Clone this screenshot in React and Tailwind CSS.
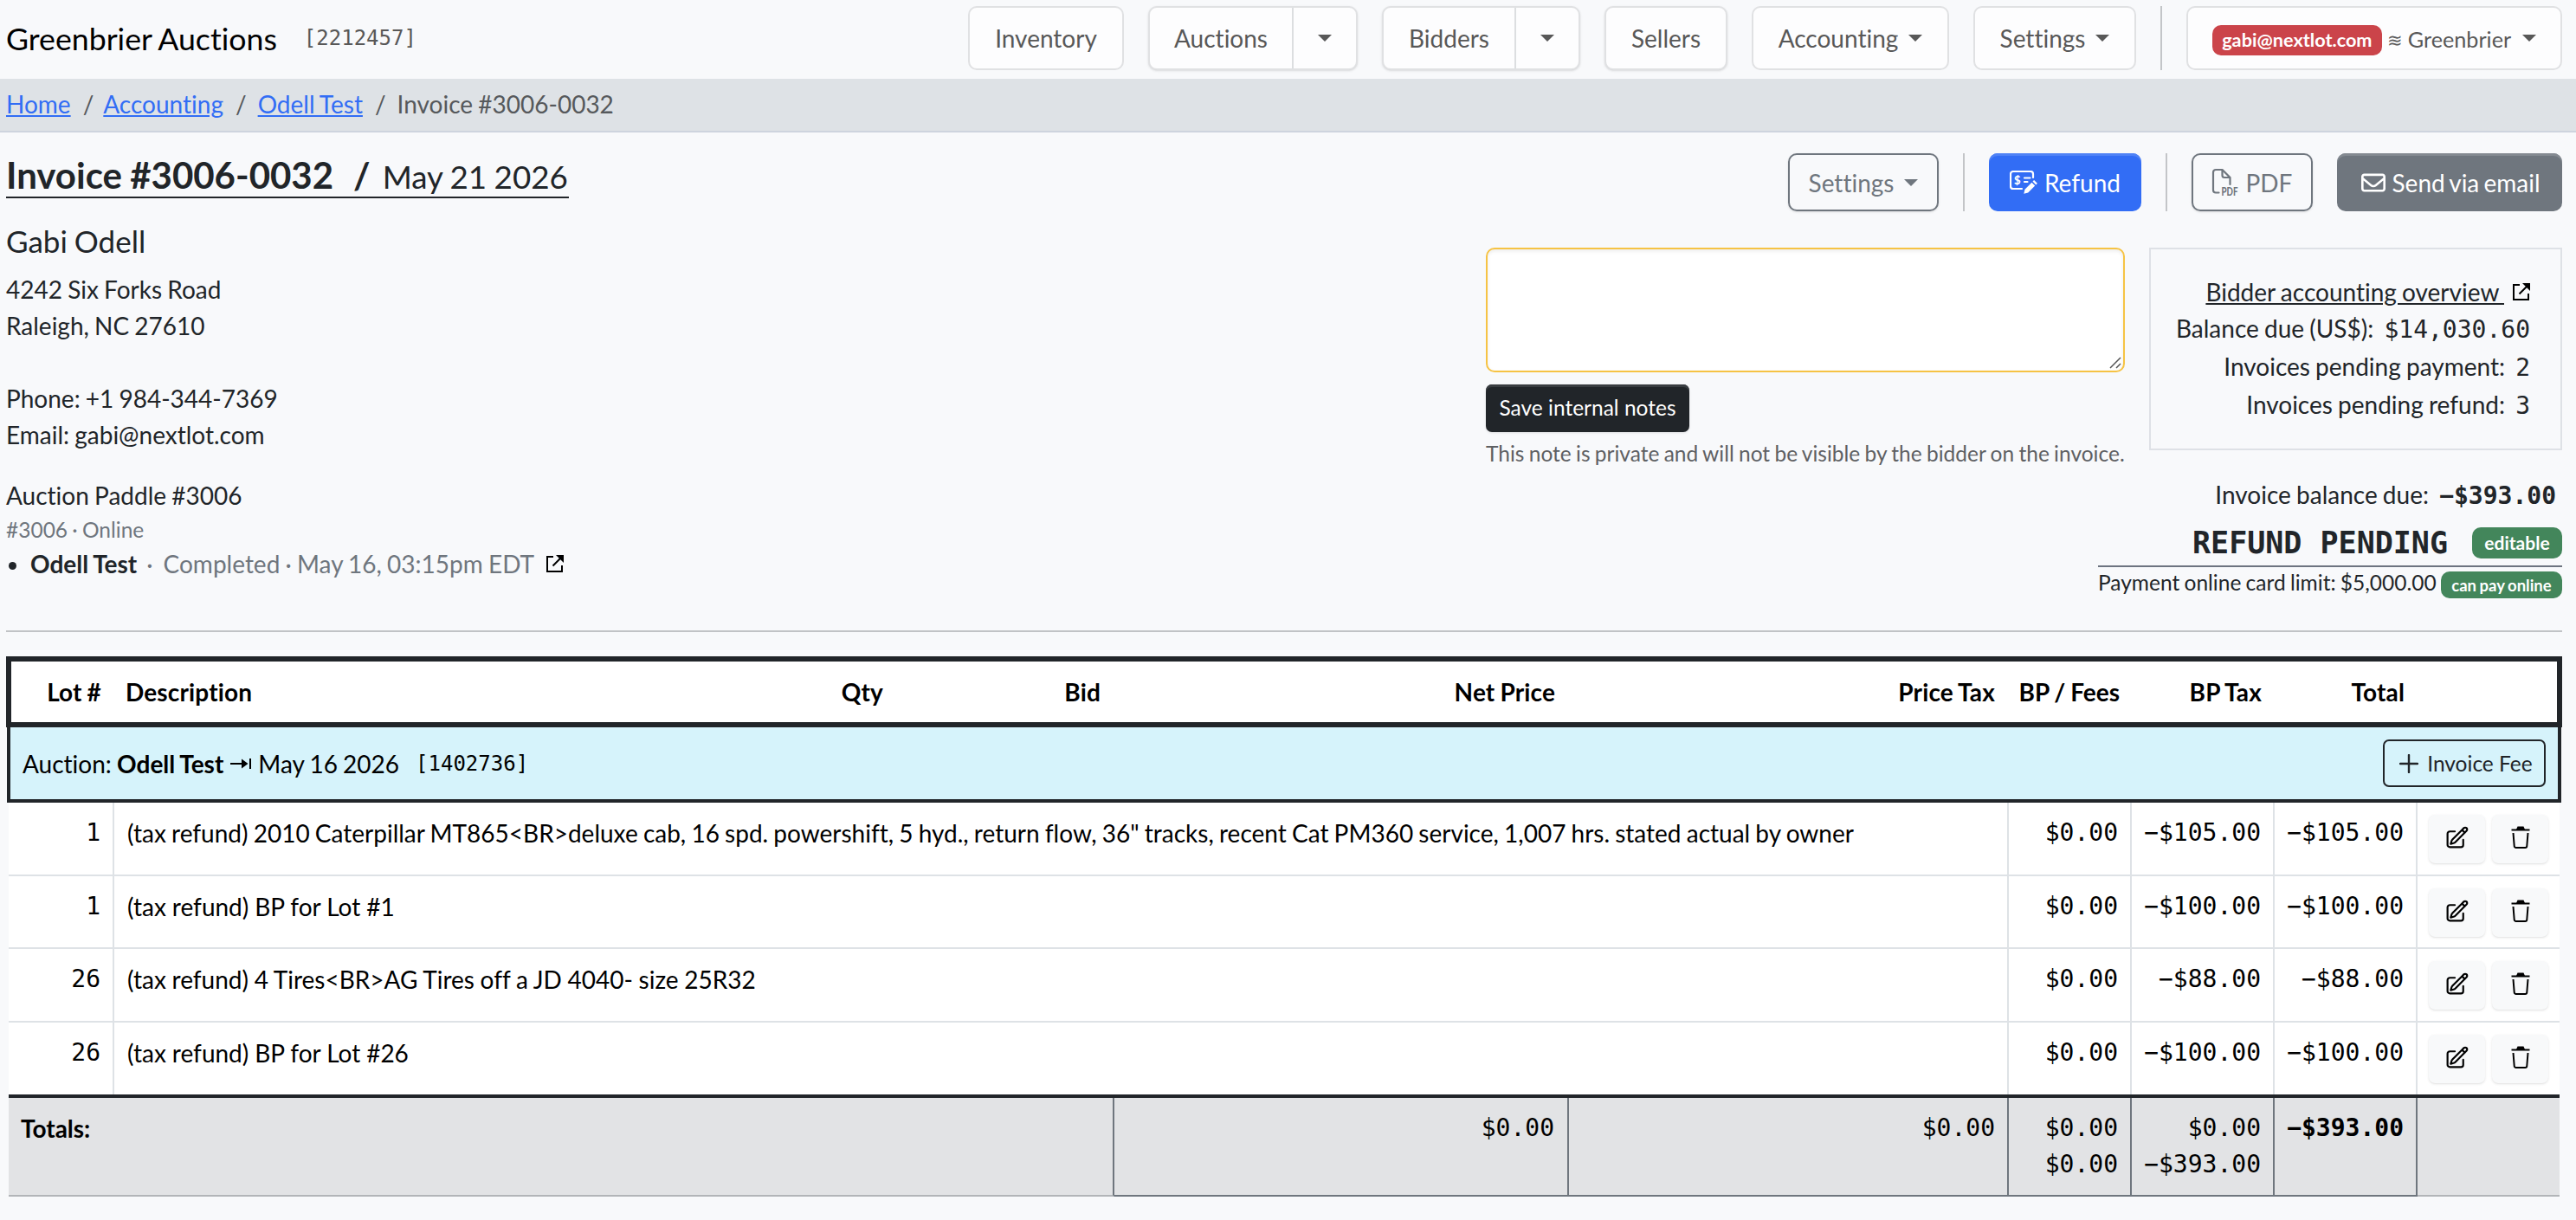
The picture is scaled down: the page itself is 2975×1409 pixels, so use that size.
import React from "react";
import { FaRegEnvelope } from "react-icons/fa6";
import { HiOutlinePencilSquare } from "react-icons/hi2";

const lots = [
  { lot: "1", desc: '(tax refund) 2010 Caterpillar MT865<BR>deluxe cab, 16 spd. powershift, 5 hyd., return flow, 36" tracks, recent Cat PM360 service, 1,007 hrs. stated actual by owner', fees: "$0.00", tax: "−$105.00", total: "−$105.00", height: "h-[85px] border-b-2" },
  { lot: "1", desc: "(tax refund) BP for Lot #1", fees: "$0.00", tax: "−$100.00", total: "−$100.00", height: "h-[84px] border-b-2 [word-spacing:-0.2px]" },
  { lot: "26", desc: "(tax refund) 4 Tires<BR>AG Tires off a JD 4040- size 25R32", fees: "$0.00", tax: "−$88.00", total: "−$88.00", height: "h-[85px] border-b-2 [word-spacing:-0.5px]" },
  { lot: "26", desc: "(tax refund) BP for Lot #26", fees: "$0.00", tax: "−$100.00", total: "−$100.00", height: "h-[83px] [word-spacing:-0.2px]" },
];

function Caret({ className = "" }) {
  return (
    <svg className={`h-2 w-4 ${className}`} viewBox="0 0 16 8" fill="currentColor">
      <path d="M0 0h16L8 8z" />
    </svg>
  );
}

function ExternalIcon() {
  return (
    <svg className="size-5" viewBox="0 0 20 20" fill="none" stroke="#000" strokeWidth="2">
      <path d="M8 2H1v17h17v-7M7.500 12.500L17 3" />
      <path d="M11 0h9v9l-3-3-3-3z" fill="#000" stroke="none" />
    </svg>
  );
}

function RefundIcon() {
  return (
    <svg className="h-[27px] w-8" viewBox="0 0 32 27" fill="none" stroke="currentColor" strokeWidth="2.2" strokeLinecap="round">
      <path d="M14 21H4a3 3 0 0 1-3-3V4a3 3 0 0 1 3-3h20a3 3 0 0 1 3 3v4" />
      <path d="M17 8.500h6.500M17 13h3.500" />
      <text x="5" y="15.700" fontSize="13" fontWeight="900" fill="currentColor" stroke="none">$</text>
      <path d="M16.300 26.700l1.200-5 8-8 3.700 3.700-8 8zM26.500 12.600l1.600-1.600 3.800 3.800-1.600 1.600z" fill="currentColor" stroke="none" />
    </svg>
  );
}

function PdfIcon() {
  return (
    <svg className="h-[31px] w-[30px] overflow-visible" viewBox="0 0 30 31" fill="none" stroke="currentColor" strokeWidth="2.200" strokeLinecap="round" strokeLinejoin="round">
      <path d="M7.500 27.500H4a3 3 0 0 1-3-3V4a3 3 0 0 1 3-3h7.500l9 9v8" />
      <path d="M11.500 1.500v6a2.500 2.500 0 0 0 2.500 2.500h6" />
      <text x="10.500" y="30.500" fontSize="12.500" fontWeight="900" textLength="19" lengthAdjust="spacingAndGlyphs" fill="currentColor" stroke="none">PDF</text>
    </svg>
  );
}

function TrashIcon() {
  return (
    <svg className="h-[26px] w-[22px]" viewBox="0 0 22 26" fill="none" stroke="#000" strokeWidth="2">
      <path d="M0.500 4.500h21" />
      <path d="M6 4l1.500-3.500h7L16 4z" fill="#000" stroke="none" />
      <path d="M2.500 8l1.200 15a2 2 0 0 0 2 2h10.600a2 2 0 0 0 2-2l1.200-15" />
    </svg>
  );
}

const navButton = "flex h-[74px] items-center justify-center rounded-[10px] border-2 border-[#e0e1e3] bg-[#fdfdfe] text-[#585858]";

function Navbar() {
  return (
    <header className="flex h-[91px] items-start justify-between pt-[7px] pr-4 pl-[7px]">
      <div className="flex h-[74px] items-center">
        <span className="pt-px text-[35.700px] text-black">Greenbrier Auctions</span>
        <span className="ml-[31px] font-['DejaVu_Sans_Mono'] text-2xl text-[#585858]">[2212457]</span>
      </div>
      <nav className="flex gap-7">
        <button className={`${navButton} w-[180px]`}>Inventory</button>
        <div className={`${navButton} w-[242px] shadow-sm`}>
          <span className="flex h-full w-[166px] items-center justify-center border-r-2 border-[#dcdee0]">Auctions</span>
          <span className="flex flex-1 justify-center"><Caret /></span>
        </div>
        <div className={`${navButton} w-[229px] shadow-sm`}>
          <span className="flex h-full w-[153px] items-center justify-center border-r-2 border-[#dcdee0]">Bidders</span>
          <span className="flex flex-1 justify-center"><Caret /></span>
        </div>
        <button className={`${navButton} w-[142px] shadow-sm`}>Sellers</button>
        <button className={`${navButton} w-[228px]`}>Accounting<Caret className="ml-3" /></button>
        <button className={`${navButton} w-[188px]`}>Settings<Caret className="ml-3" /></button>
        <div className="w-0.5 bg-[#c3c5c8]" />
        <button className={`${navButton} w-[434px]`}>
          <span className="mt-1 flex h-[35px] w-[196px] items-center justify-center rounded-[10px] bg-[#cb444a] text-[21.700px] font-bold text-white">gabi@nextlot.com</span>
          <span className="mx-1.5 mt-1 text-[21px]">≋</span>
          <span className="mt-0.5 text-[25.200px]">Greenbrier</span>
          <Caret className="ml-[13px]" />
        </button>
      </nav>
    </header>
  );
}

function Breadcrumb() {
  return (
    <div className="flex h-[62px] items-center gap-3.5 border-b-2 border-[#ced4de] bg-[#dee2e6] pb-0.5 pl-[7px] text-[#56595c]">
      <a className="text-[#326df5] underline">Home</a>
      <span className="-mr-[3px]">/</span>
      <a className="text-[#326df5] underline">Accounting</a>
      <span className="-mr-px">/</span>
      <a className="text-[#326df5] underline">Odell Test</a>
      <span className="-mr-px">/</span>
      <span>Invoice #3006-0032</span>
    </div>
  );
}

function Customer() {
  return (
    <div>
      <h1 className="flex h-[52px] w-[650px] items-baseline border-b-2 text-[42px] leading-[50px] whitespace-nowrap">
        <b>Invoice #3006-0032</b>
        <b className="ml-[23px]">/</b>
        <span className="ml-3.5 text-[36.750px]">May 21 2026</span>
      </h1>
      <h2 className="mt-7 mb-3.5 text-[35px] leading-[42px]">Gabi Odell</h2>
      <p>4242 Six Forks Road</p>
      <p>Raleigh, NC 27610</p>
      <p className="mt-[42px]">Phone: +1 984-344-7369</p>
      <p>Email: gabi@nextlot.com</p>
      <p className="mt-7">Auction Paddle #3006</p>
      <p className="text-[24.500px] leading-[37px] text-[#6f767e]">#3006 · Online</p>
      <div className="flex items-center">
        <span className="mx-[3px] mt-1 size-[9px] rounded-full bg-[#212529]" />
        <b className="ml-[13px]">Odell Test</b>
        <span className="ml-[11px] text-[#6f767e]">·</span>
        <span className="mr-3.5 ml-3 text-[#6f767e]">Completed · May 16, 03:15pm EDT</span>
        <ExternalIcon />
      </div>
    </div>
  );
}

const actionButton = "flex h-[67px] items-center justify-center rounded-[10px]";

function Actions() {
  return (
    <div className="flex gap-7">
      <button className={`${actionButton} w-[174px] border-2 border-[#6f767e] text-[#6f767e] shadow-sm`}>Settings<Caret className="ml-3" /></button>
      <div className="w-0.5 bg-[#c3c5c8]" />
      <button className={`${actionButton} w-[176px] gap-2 bg-[#326df5] text-white inset-shadow-[0_3px_0_#4f82f6]`}><RefundIcon />Refund</button>
      <div className="w-0.5 bg-[#c3c5c8]" />
      <button className={`${actionButton} w-[140px] gap-[9px] border-2 border-[#6f767e] text-[#6f767e] shadow-sm`}><PdfIcon />PDF</button>
      <button className={`${actionButton} w-[260px] gap-2 bg-[#6f767e] pl-0.5 text-white [word-spacing:-2px] inset-shadow-[0_3px_0_#848a91]`}><FaRegEnvelope className="size-7" />Send via email</button>
    </div>
  );
}

function Notes() {
  return (
    <div className="w-[738px]">
      <div className="relative h-36">
        <textarea className="block h-36 w-full resize-none rounded-[10px] border-2 border-[#f6c344] bg-white inset-shadow-[0_2px_4px_#00000014]" />
        <svg className="absolute right-1 bottom-1 size-3.5" viewBox="0 0 14 14" stroke="#555" strokeWidth="1.5">
          <path d="M1 13L13 1M8 13l5-5" />
        </svg>
      </div>
      <button className="mt-3.5 h-[55px] w-[235px] rounded-[7px] bg-[#212529] pb-0.5 text-[24.500px] text-white shadow-sm inset-shadow-[0_3px_0_#393d41]">Save internal notes</button>
      <p className="mt-[7px] text-[24.500px] leading-9 whitespace-nowrap text-[#5e6063]">This note is private and will not be visible by the bidder on the invoice.</p>
    </div>
  );
}

function Balance() {
  return (
    <div className="h-[234px] w-[477px] border-2 border-[#dee1e6] pt-7 pr-[35px] text-right">
      <div className="flex h-[42px] items-center justify-end gap-[10px]">
        <span className="underline whitespace-pre">Bidder accounting overview </span>
        <ExternalIcon />
      </div>
      <p>Balance due (US$): <span className="ml-1.5 font-['DejaVu_Sans_Mono']">$14,030.60</span></p>
      <p>Invoices pending payment: <span className="ml-1.5 font-['DejaVu_Sans_Mono']">2</span></p>
      <p>Invoices pending refund: <span className="ml-1.5 font-['DejaVu_Sans_Mono']">3</span></p>
    </div>
  );
}

function Status() {
  return (
    <div className="mt-[30px] flex w-[536px] flex-col">
      <p className="pr-[7px] text-right">Invoice balance due: <b className="ml-1.5 font-['DejaVu_Sans_Mono']">−$393.00</b></p>
      <div className="flex h-[61px] items-center justify-end border-b-2 border-[#6d7480] pt-1.5">
        <b className="font-['DejaVu_Sans_Mono'] text-[35px] [word-spacing:0px]">REFUND PENDING</b>
        <span className="ml-7 flex h-9 w-[104px] items-center justify-center rounded-[10px] bg-[#43865b] text-[21px] font-bold text-white">editable</span>
      </div>
      <div className="mt-[5px] flex h-[31px] items-center justify-between">
        <span className="mb-[5px] text-[24.500px] whitespace-nowrap">Payment online card limit: $5,000.00</span>
        <span className="flex h-[31px] w-[140px] items-center justify-center rounded-[10px] bg-[#43865b] text-[18.500px] font-bold text-white">can pay online</span>
      </div>
    </div>
  );
}

function LotTable() {
  return (
    <section className="mt-7 text-black">
      <div className="grid h-[82px] grid-cols-[118px_904px_251px_525px_508px_143px_165px_165px_161px] items-center border-6 border-[#212529] bg-white text-right font-bold tracking-[0.15px] whitespace-nowrap *:pr-[15px] *:pl-3.5">
        <span className="pr-3.5!">Lot #</span>
        <span className="flex justify-between"><span>Description</span><span>Qty</span></span>
        <span>Bid</span>
        <span>Net Price</span>
        <span>Price Tax</span>
        <span className="pl-0! pr-3.5! tracking-normal">BP / Fees</span>
        <span>BP Tax</span>
        <span>Total</span>
      </div>
      <div className="mr-px ml-px flex h-[87px] items-center justify-between border-4 border-t-0 border-[#212529] bg-[#d6f3fb] pr-3.5 pl-3.5">
        <div className="flex items-center">
          <span>Auction: <b>Odell Test</b></span>
          <svg className="mx-2 h-3.5 w-6" viewBox="0 0 24 14" fill="none" stroke="#000" strokeWidth="2">
            <path d="M0 7h16M23 1v12" />
            <path d="M13 1.500v11L20.500 7z" fill="#000" stroke="none" />
          </svg>
          <span>May 16 2026</span>
          <span className="ml-[19px] font-['DejaVu_Sans_Mono'] text-2xl">[1402736]</span>
        </div>
        <button className="flex h-[55px] w-[188px] items-center justify-center gap-2.5 rounded-[7px] border-2 border-[#212529] pl-1 text-[24.500px] text-[#212529]">
          <svg className="size-[22px]" viewBox="0 0 22 22" stroke="currentColor" strokeWidth="2.400" strokeLinecap="round"><path d="M11 1v20M1 11h20" /></svg>
          Invoice Fee
        </button>
      </div>
      <div className="mr-[3px] ml-[3px] bg-white">
        {lots.map((row, i) => (
          <div key={i} className={`grid grid-cols-[122px_2188px_142px_165px_165px_164px] border-[#dee2e6] ${row.height} *:border-[#dee2e6] *:pt-3.5`}>
            <span className="border-r-2 pr-3.5 text-right font-['DejaVu_Sans_Mono']">{row.lot}</span>
            <span className="border-r-2 pl-[15px]">{row.desc}</span>
            <span className="border-r-2 pr-3.5 text-right font-['DejaVu_Sans_Mono']">{row.fees}</span>
            <span className="border-r-2 pr-3.5 text-right font-['DejaVu_Sans_Mono']">{row.tax}</span>
            <span className="border-r-2 pr-3.5 text-right font-['DejaVu_Sans_Mono']">{row.total}</span>
            <div className="flex gap-2 pl-[13px]">
              <button className="flex h-14 w-[65px] items-center justify-center rounded-[7px] bg-[#f8f9fa] pb-1 shadow-sm"><HiOutlinePencilSquare className="size-[29px]" strokeWidth={1.8} /></button>
              <button className="flex h-14 w-[65px] items-center justify-center rounded-[7px] bg-[#f8f9fa] pb-1 shadow-sm"><TrashIcon /></button>
            </div>
          </div>
        ))}
        <div className="grid h-[118px] grid-cols-[1277px_525px_508px_142px_165px_165px_164px] border-t-4 border-[#212529] bg-[#e2e3e5] text-right font-['DejaVu_Sans_Mono'] *:border-b-2 *:border-[#6f767e] *:pt-3.5 *:pr-3.5">
          <b className="border-r-2 border-b-[#b2b5b8]! pl-3.5 text-left font-['Lato']">Totals:</b>
          <span className="border-r-2 pr-[15px]!">$0.00</span>
          <span className="border-r-2">$0.00</span>
          <span className="border-r-2">$0.00<br />$0.00</span>
          <span className="border-r-2">$0.00<br />−$393.00</span>
          <b className="border-r-2">−$393.00</b>
          <span className="border-b-[#b2b5b8]!" />
        </div>
      </div>
    </section>
  );
}

export default function App() {
  return (
    <div className="h-[1409px] w-[2975px] overflow-hidden bg-[#f8f9fb] font-['Lato',sans-serif] text-[28px] leading-[42px] text-[#212529] [font-variant-ligatures:none] [word-spacing:-0.035em]">
      <Navbar />
      <Breadcrumb />
      <main className="pt-6 pr-4 pl-[7px]">
        <div className="flex h-[553px] justify-between border-b-2 border-[#c1c3c6]">
          <Customer />
          <div className="flex flex-col items-end">
            <Actions />
            <div className="mt-[42px] flex h-[234px] gap-7">
              <Notes />
              <Balance />
            </div>
            <Status />
          </div>
        </div>
        <LotTable />
      </main>
    </div>
  );
}
